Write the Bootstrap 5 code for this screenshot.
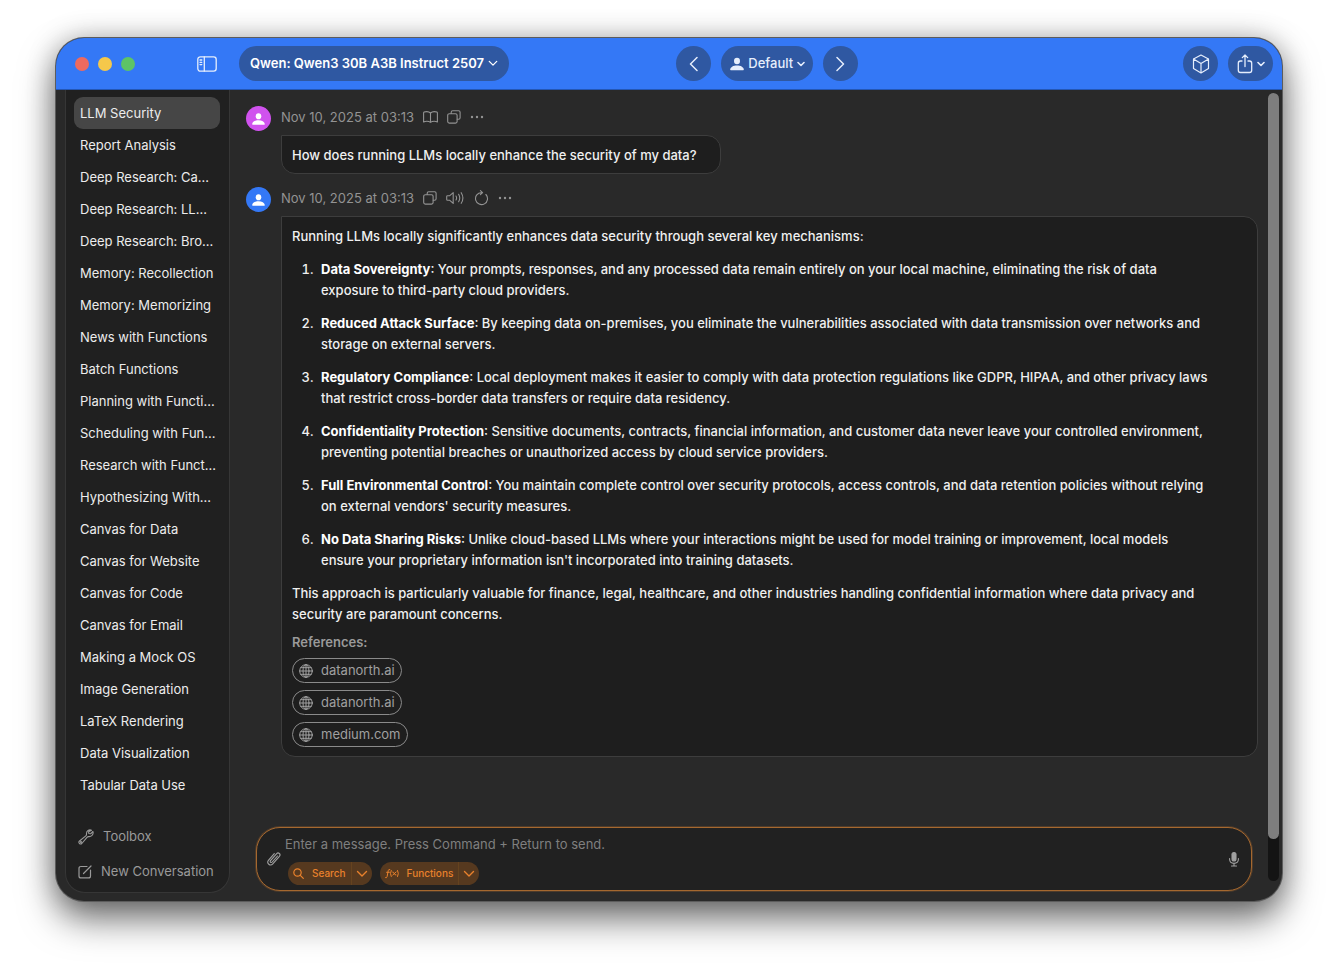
<!DOCTYPE html>
<html lang="en">
<head>
<meta charset="utf-8">
<meta name="viewport" content="width=device-width, initial-scale=1">
<title>LLM Security</title>
<link href="https://cdn.jsdelivr.net/npm/bootstrap@5.3.0/dist/css/bootstrap.min.css" rel="stylesheet">
<style>
  body { font: 400 13px/21px Inter, "Liberation Sans", sans-serif; background: #fff; color: #f0f0f0; padding: 38px 56px 74px; }
  svg { display: block; fill: none; stroke: currentColor; stroke-linecap: round; stroke-linejoin: round; flex: none; }
  button { background: none; border: 0; padding: 0; color: inherit; font: inherit; }
  .app-window { background: #292929; border-radius: 28px; overflow: hidden; box-shadow: 0 0 0 1px #5c5c5c, 0 18px 36px rgba(0,0,0,.55), 0 0 28px rgba(0,0,0,.25); }
  .titlebar { background: #3478f6; height: 52px; padding: 0 9px 0 19px; color: #e6eefc; border-bottom: 1px solid #2457b5; }
  .lights { gap: 9px; }
  .light { width: 14px; height: 14px; border-radius: 50%; }
  .light-close { background: #ee6a5f; }
  .light-min { background: #f5c84b; }
  .light-zoom { background: #5dc466; }
  .toggle { margin: 0 22px 0 62px; }
  .pill { background: #2f58a2; height: 35px; border-radius: 18px; padding: 0 8px 0 9px; gap: 4px; }
  .pill-model { padding: 0 11px; color: #fff; }
  .pill-round { width: 35px; padding: 0; }
  .pill-group { gap: 10px; }
  .gap-before { flex: 34 1 0; }
  .gap-after { flex: 66 1 0; }
  .side { width: 165px; margin: 0 0 8px 9px; padding: 7px 9px 3px 8px; background: #202020; border: 1px solid #363636; border-top: 0; border-radius: 0 0 20px 20px; }
  .side-link { display: block; height: 32px; line-height: 32px; padding: 0 6px; border-radius: 9px; color: #ececec; text-decoration: none; white-space: nowrap; }
  .side-link.active { background: #464646; }
  .side-tool { height: 35px; color: #9a9a9a; padding-left: 4px; gap: 9px; white-space: nowrap; }
  .chat { padding: 16px 10px 0 16px; }
  .message { gap: 10px; margin-bottom: 13px; }
  .avatar { width: 25px; height: 25px; border-radius: 50%; color: #fff; flex: none; }
  .avatar-user { background: #d052ee; }
  .avatar-bot { background: #3478f6; }
  .meta { height: 22px; margin-bottom: 7px; gap: 9px; color: #939393; }
  .bubble { background: #1e1e1e; border: 1px solid #3d3d3d; border-radius: 0 14px 14px 14px; padding: 9px 23px 7px 10px; font-weight: 500; }
  .bubble-long { padding: 9px 46px 9px 10px; }
  .bubble p { margin: 0 0 12px; }
  .bubble ol { margin: 0 0 12px; padding-left: 25px; }
  .bubble li { padding-left: 4px; margin-bottom: 12px; }
  .bubble b { font-weight: 700; color: #fff; }
  .bubble p.refs-title { margin: -5px 0 5px; color: #9a9a9a; font-weight: 600; }
  .ref { height: 25px; padding: 0 6px; gap: 8px; border: 1px solid #8a8a8a; border-radius: 13px; color: #a0a0a0; text-decoration: none; font-weight: 400; }
  .refs { gap: 7px; }
  .composer { margin: 0 16px 10px 26px; height: 64px; border: 1px solid #a5682f; border-radius: 24px; background: #212121; padding: 5px 12px 5px 10px; box-shadow: 0 0 0 1px rgba(165,104,47,.3); color: #a0a0a0; }
  .composer input { background: none; border: 0; padding: 0; height: 22px; color: #e6e6e6; outline: 0; }
  .composer input::placeholder { color: #7f7f7f; opacity: 1; }
  .compose-body { padding-left: 4px; gap: 7px; }
  .chips { gap: 8px; padding-left: 3px; }
  .chip { background: #56391f; color: #e8812c; height: 23px; border-radius: 12px; font-size: 10px; }
  .chip .act { padding: 0 5px; gap: 8px; }
  .chip .more { border-left: 1px solid #65431f; width: 21px; height: 23px; }
  .track { width: 11px; flex: none; margin: 3px 3px 20px 0; border-radius: 6px; background: #141414; }
  .thumb { height: 94.7%; border-radius: 6px; background: #7e7e7e; }
</style>
</head>
<body class="min-vh-100 d-flex flex-column">
<svg width="0" height="0" class="position-absolute" aria-hidden="true">
  <symbol id="person" viewBox="0 0 16 16"><g fill="currentColor" stroke="none"><ellipse cx="8" cy="4.600" rx="3.400" ry="3.800"/><path d="M1 15c-.6 0-.9-.4-.8-1C.7 11.400 3.800 9.600 8 9.600s7.300 1.800 7.800 4.400c.1.6-.2 1-.8 1z"/></g></symbol>
  <symbol id="copy" viewBox="0 0 14 14"><path d="M4.200 3.500V2.200Q4.200.7 5.700.7h5.900q1.500 0 1.500 1.500v5.600q0 1.500-1.500 1.500h-1.300"/><rect x=".7" y="3.700" width="9.400" height="9.400" rx="1.600"/></symbol>
  <symbol id="dots" viewBox="0 0 14 4"><g fill="currentColor" stroke="none"><circle cx="2" cy="2" r="1.200"/><circle cx="7" cy="2" r="1.200"/><circle cx="12" cy="2" r="1.200"/></g></symbol>
  <symbol id="down" viewBox="0 0 12 8"><path d="M1.500 1.500 6 6l4.500-4.500"/></symbol>
  <symbol id="globe" viewBox="0 0 14 14"><circle cx="7" cy="7" r="6.300"/><ellipse cx="7" cy="7" rx="3" ry="6.300"/><path d="M7 .7v12.600M.7 7h12.600M1.800 3.700h10.400M1.800 10.300h10.400"/></symbol>
</svg>

<div class="app-window flex-grow-1 d-flex flex-column">
  <header class="titlebar d-flex align-items-center">
    <div class="lights d-flex">
      <span class="light light-close"></span>
      <span class="light light-min"></span>
      <span class="light light-zoom"></span>
    </div>
    <button class="toggle" aria-label="Toggle sidebar">
      <svg width="20" height="16" viewBox="0 0 20 16" stroke-width="1.300"><rect x=".8" y=".8" width="18.400" height="14.400" rx="2.600"/><path d="M7.300 1v14M3 4h1.800M3 6.300h1.800M3 8.600h1.800"/></svg>
    </button>
    <button class="pill pill-model d-flex align-items-center fw-semibold text-nowrap">Qwen: Qwen3 30B A3B Instruct 2507
      <svg width="10" height="7" stroke-width="1.500"><use href="#down"/></svg></button>
    <div class="gap-before"></div>
    <div class="pill-group d-flex">
      <button class="pill pill-round d-flex align-items-center justify-content-center" aria-label="Previous"><svg width="9" height="16" viewBox="0 0 9 16" stroke-width="1.500"><path d="M8 1.500 1.500 8 8 14.500"/></svg></button>
      <button class="pill d-flex align-items-center fw-medium"><svg width="14" height="16"><use href="#person"/></svg>Default<svg width="8" height="6" viewBox="0 0 8 6" stroke-width="1.600"><path d="m1 1.500 3 3 3-3"/></svg></button>
      <button class="pill pill-round d-flex align-items-center justify-content-center" aria-label="Next"><svg width="9" height="16" viewBox="0 0 9 16" stroke-width="1.500"><path d="M1 1.500 7.500 8 1 14.500"/></svg></button>
    </div>
    <div class="gap-after"></div>
    <div class="pill-group d-flex">
      <button class="pill pill-round d-flex align-items-center justify-content-center" aria-label="Model"><svg width="18" height="20" viewBox="0 0 18 20" stroke-width="1.200"><path d="M9 1 16.500 5v9.500L9 19l-7.500-4.500V5zM1.500 5 9 9.500 16.500 5M9 9.500V19"/></svg></button>
      <button class="pill d-flex align-items-center" aria-label="Share"><svg width="16" height="20" viewBox="0 0 15 20" stroke-width="1.300"><path d="M4.500 7H3Q.8 7 .8 9.200v7.100q0 2.200 2.200 2.200h9q2.200 0 2.200-2.200V9.200Q14.200 7 12 7h-1.500M7.500 12.500V1M4.800 3.600 7.500 1l2.700 2.600"/></svg><svg width="8" height="6" viewBox="0 0 8 6" stroke-width="1.600"><path d="m1 1.500 3 3 3-3"/></svg></button>
    </div>
  </header>

  <div class="d-flex flex-grow-1">
    <aside class="side d-flex flex-column flex-shrink-0">
      <nav class="flex-grow-1">
        <a class="side-link active" href="#">LLM Security</a>
        <a class="side-link" href="#">Report Analysis</a>
        <a class="side-link" href="#">Deep Research: Ca...</a>
        <a class="side-link" href="#">Deep Research: LL...</a>
        <a class="side-link" href="#">Deep Research: Bro...</a>
        <a class="side-link" href="#">Memory: Recollection</a>
        <a class="side-link" href="#">Memory: Memorizing</a>
        <a class="side-link" href="#">News with Functions</a>
        <a class="side-link" href="#">Batch Functions</a>
        <a class="side-link" href="#">Planning with Functi...</a>
        <a class="side-link" href="#">Scheduling with Fun...</a>
        <a class="side-link" href="#">Research with Funct...</a>
        <a class="side-link" href="#">Hypothesizing With...</a>
        <a class="side-link" href="#">Canvas for Data</a>
        <a class="side-link" href="#">Canvas for Website</a>
        <a class="side-link" href="#">Canvas for Code</a>
        <a class="side-link" href="#">Canvas for Email</a>
        <a class="side-link" href="#">Making a Mock OS</a>
        <a class="side-link" href="#">Image Generation</a>
        <a class="side-link" href="#">LaTeX Rendering</a>
        <a class="side-link" href="#">Data Visualization</a>
        <a class="side-link" href="#">Tabular Data Use</a>
      </nav>
      <button class="side-tool d-flex align-items-center"><svg width="16" height="16" viewBox="0 0 16 16" stroke-width="1.100"><path d="M13.500 1.200c-2.300-1-5.300.6-5 3.700.1.900-.1 1.500-.7 2L1.500 12c-1.600 1.500.6 4 2.300 2.500L9 8.300c.5-.6 1.100-.8 2-.7 3.100.2 4.700-2.700 3.900-5.100L12.600 4.800l-1.800-.3-.2-1.700z"/><circle cx="3" cy="13.100" r=".5"/></svg>Toolbox</button>
      <button class="side-tool d-flex align-items-center"><svg width="14" height="14" viewBox="0 0 14 14" stroke-width="1.200"><path d="M9 1.500H3Q1 1.500 1 3.500v7.400q0 2 2 2h7.500q2 0 2-2V5M5.500 8.500 13 1"/></svg>New Conversation</button>
    </aside>

    <main class="flex-grow-1 d-flex flex-column" style="min-width:0">
      <section class="chat flex-grow-1">
        <article class="message d-flex">
          <div class="avatar avatar-user d-flex align-items-center justify-content-center"><svg width="13" height="14"><use href="#person"/></svg></div>
          <div>
            <div class="meta d-flex align-items-center"><time>Nov 10, 2025 at 03:13</time>
              <button aria-label="Read"><svg width="15" height="12" viewBox="0 0 15 12" stroke-width="1.100"><path d="M7.500 2Q6 .6 3.800.6q-1.600 0-2.600.5-.6.3-.6.900v9q1.500-.7 3.200-.7 2.300 0 3.700 1.100 1.400-1.100 3.700-1.100 1.700 0 3.200.7V2q0-.6-.6-.9-1-.5-2.600-.5Q9 .6 7.500 2zv9.200"/></svg></button>
              <button aria-label="Copy"><svg width="14" height="14" stroke-width="1.100"><use href="#copy"/></svg></button>
              <button aria-label="More"><svg width="14" height="4"><use href="#dots"/></svg></button>
            </div>
            <div class="bubble">How does running LLMs locally enhance the security of my data?</div>
          </div>
        </article>

        <article class="message d-flex">
          <div class="avatar avatar-bot d-flex align-items-center justify-content-center"><svg width="13" height="14"><use href="#person"/></svg></div>
          <div class="flex-grow-1">
            <div class="meta d-flex align-items-center"><time>Nov 10, 2025 at 03:13</time>
              <button aria-label="Copy"><svg width="14" height="14" stroke-width="1.100"><use href="#copy"/></svg></button>
              <button aria-label="Speak"><svg width="19" height="14" viewBox="0 0 19 14" stroke-width="1.100"><path d="M1.500 4.800h2L7.200 1.600v10.800L3.500 9.200h-2q-.8 0-.8-.8V5.600q0-.8.8-.8zM10 5q1.200 2 0 4M12.600 3.300q2.300 3.700 0 7.400M15.200 1.700q3.400 5.300 0 10.600"/></svg></button>
              <button aria-label="Regenerate"><svg width="15" height="16" viewBox="0 0 15 16" stroke-width="1.100"><path d="M8.300 2.600H7.500A6 6 0 1 0 11.900 4.500M6.400.6l2.200 2-2.200 2"/></svg></button>
              <button aria-label="More"><svg width="14" height="4"><use href="#dots"/></svg></button>
            </div>
            <div class="bubble bubble-long">
              <p>Running LLMs locally significantly enhances data security through several key mechanisms:</p>
              <ol>
                <li><b>Data Sovereignty</b>: Your prompts, responses, and any processed data remain entirely on your local machine, eliminating the risk of data exposure to third-party cloud providers.</li>
                <li><b>Reduced Attack Surface</b>: By keeping data on-premises, you eliminate the vulnerabilities associated with data transmission over networks and storage on external servers.</li>
                <li><b>Regulatory Compliance</b>: Local deployment makes it easier to comply with data protection regulations like GDPR, HIPAA, and other privacy laws that restrict cross-border data transfers or require data residency.</li>
                <li><b>Confidentiality Protection</b>: Sensitive documents, contracts, financial information, and customer data never leave your controlled environment, preventing potential breaches or unauthorized access by cloud service providers.</li>
                <li><b>Full Environmental Control</b>: You maintain complete control over security protocols, access controls, and data retention policies without relying on external vendors' security measures.</li>
                <li><b>No Data Sharing Risks</b>: Unlike cloud-based LLMs where your interactions might be used for model training or improvement, local models ensure your proprietary information isn't incorporated into training datasets.</li>
              </ol>
              <p>This approach is particularly valuable for finance, legal, healthcare, and other industries handling confidential information where data privacy and security are paramount concerns.</p>
              <p class="refs-title">References:</p>
              <div class="refs d-flex flex-column align-items-start">
                <a class="ref d-flex align-items-center" href="#"><svg width="14" height="14"><use href="#globe"/></svg>datanorth.ai</a>
                <a class="ref d-flex align-items-center" href="#"><svg width="14" height="14"><use href="#globe"/></svg>datanorth.ai</a>
                <a class="ref d-flex align-items-center" href="#"><svg width="14" height="14"><use href="#globe"/></svg>medium.com</a>
              </div>
            </div>
          </div>
        </article>
      </section>

      <form class="composer d-flex align-items-center">
        <button type="button" aria-label="Attach"><svg width="14" height="16" viewBox="0 0 14 16" stroke-width="1.100"><path d="m10.500 5-5.300 6c-1.100 1.200-2.700-.1-1.700-1.300l6-6.900c1.800-2 4.700.3 2.900 2.500l-6.600 7.500c-2.600 2.900-6.700-.6-4.200-3.600L7.300 2.700"/></svg></button>
        <div class="compose-body flex-grow-1 d-flex flex-column">
          <input class="w-100" type="text" aria-label="Message" placeholder="Enter a message. Press Command + Return to send.">
          <div class="chips d-flex">
            <div class="chip d-flex fw-medium"><button type="button" class="act d-flex align-items-center"><svg width="11" height="11" viewBox="0 0 11 11" stroke-width="1.200"><circle cx="4.500" cy="4.500" r="3.700"/><path d="m7.300 7.300 3 3"/></svg>Search</button><button type="button" class="more d-flex align-items-center justify-content-center" aria-label="Search options"><svg width="12" height="8" stroke-width="1.400"><use href="#down"/></svg></button></div>
            <div class="chip d-flex fw-medium"><button type="button" class="act d-flex align-items-center"><svg width="14" height="11" viewBox="0 0 14 11" stroke-width="1"><path d="M4.900 1.600Q3.500.9 3.200 2.700L2.100 8.600Q1.800 10.200.6 9.700M1.600 4.300h2.800M6.200 2.500q-1.600 3 0 6M12.600 2.500q1.600 3 0 6M7.700 4q1-.2 1.500 1.500T11 7M11.100 4 7.800 7"/></svg>Functions</button><button type="button" class="more d-flex align-items-center justify-content-center" aria-label="Function options"><svg width="12" height="8" stroke-width="1.400"><use href="#down"/></svg></button></div>
          </div>
        </div>
        <button type="button" aria-label="Dictate"><svg width="10" height="15" viewBox="0 0 10 15" stroke-width="1.100"><rect x="3" y=".6" width="4" height="8.400" rx="2" fill="currentColor"/><path d="M.6 6.500v1q.3 3.700 4.400 3.900 4.100-.2 4.400-3.900v-1M5 11.500V14M2.500 14h5"/></svg></button>
      </form>
    </main>
    <div class="track"><div class="thumb"></div></div>
  </div>
</div>
<script src="https://cdn.jsdelivr.net/npm/bootstrap@5.3.0/dist/js/bootstrap.bundle.min.js"></script>
</body>
</html>
